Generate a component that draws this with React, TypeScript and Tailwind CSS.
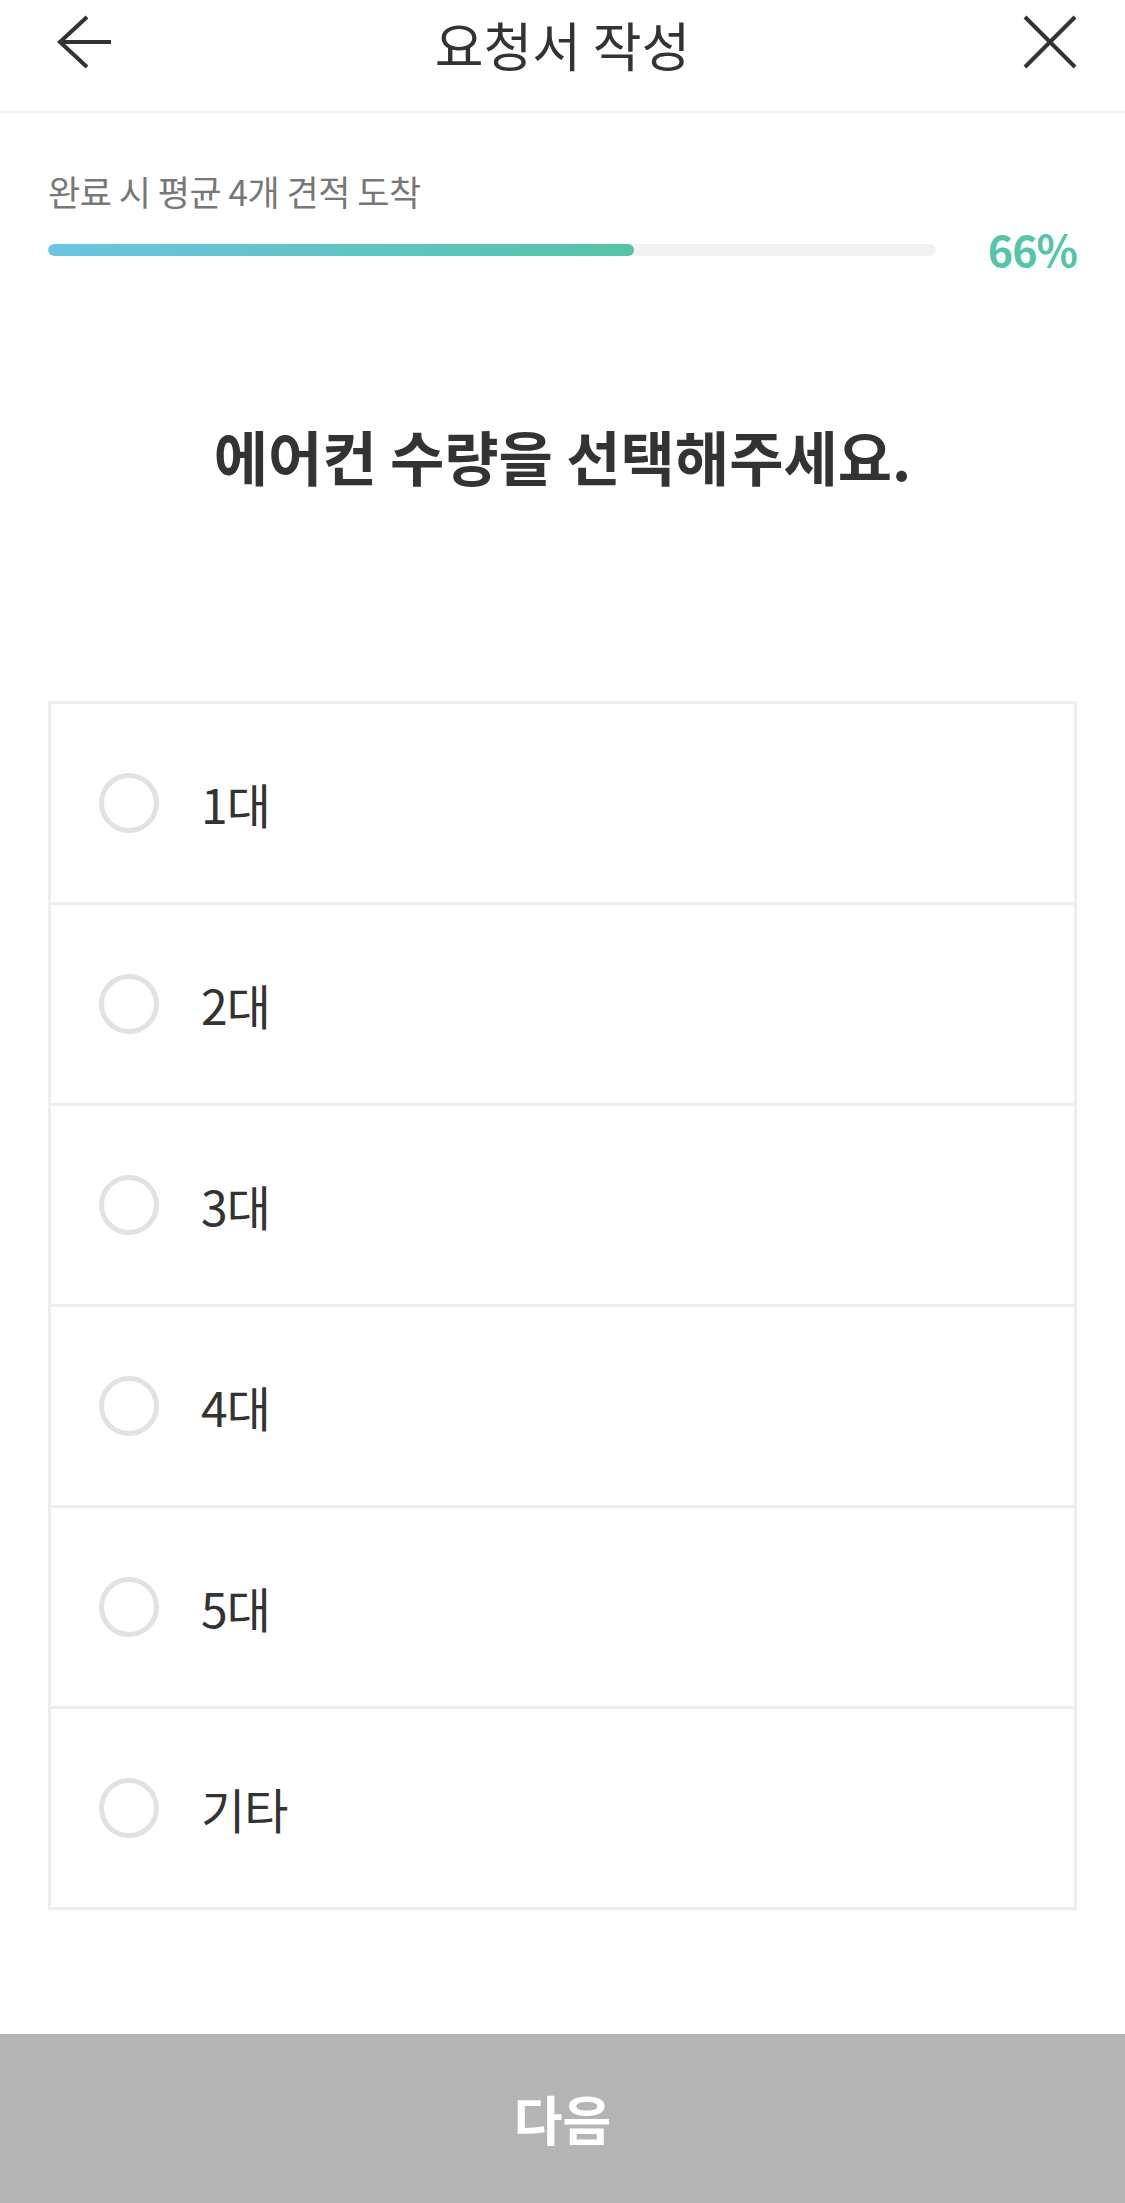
import React from "react";

const options = ["1대", "2대", "3대", "4대", "5대", "기타"];

export default function App() {
  return (
    <div
      className="flex min-h-screen w-[1125px] flex-col bg-white text-[#333333]"
      style={{ fontFamily: '"Noto Sans CJK KR", "Noto Sans", sans-serif' }}
    >
      <header className="grid h-[113px] grid-cols-[1fr_auto_1fr] items-start border-b-2 border-[#f3f3f3] px-[57px] pt-[15px]">
        <button className="h-[54px] w-[54px] justify-self-start" aria-label="back">
          <svg width="54" height="54" viewBox="0 0 54 54" fill="none">
            <path d="M30 2 L3 27 L30 52 M3 27 H54" stroke="#333" strokeWidth="4" />
          </svg>
        </button>
        <h1 className="pt-[1px] text-[53px] leading-[56px] font-normal">요청서 작성</h1>
        <button className="-mr-[9px] h-[54px] w-[54px] justify-self-end" aria-label="close">
          <svg width="54" height="54" viewBox="0 0 54 54" fill="none">
            <path d="M2 2 L52 52 M52 2 L2 52" stroke="#333" strokeWidth="4" />
          </svg>
        </button>
      </header>

      <section className="px-[48px] pt-[56px]">
        <p className="text-[35px] leading-[44px] tracking-[-0.5px] text-[#777777]">완료 시 평균 4개 견적 도착</p>
        <div className="mt-[12px] flex h-[50px] items-center">
          <div className="h-[12px] w-[888px] overflow-hidden rounded-full bg-[#f2f2f2]">
            <div
              className="h-full rounded-full bg-gradient-to-r from-[#6cc4e2] to-[#56c3a6]"
              style={{ width: "66%" }}
            />
          </div>
          <span className="-mt-[4px] ml-auto text-[43px] leading-[50px] font-bold tracking-[-1px] text-[#55c4a8]">66%</span>
        </div>
      </section>

      <h2 className="mt-[146px] text-center text-[59px] leading-[70px] font-bold text-[#333333]">
        에어컨 수량을 선택해주세요.
      </h2>

      <ul className="mx-[48px] mt-[210px] border-[3px] border-[#eeeeee]">
        {options.map((o, i) => (
          <li
            key={o}
            className={`box-content flex h-[198px] items-center ${i > 0 ? "border-t-[3px] border-[#eeeeee]" : ""}`}
          >
            <span className="ml-[48px] h-[60px] w-[60px] rounded-full border-[5px] border-[#e2e2e2]" />
            <span className="ml-[42px] text-[48px] leading-none tracking-[-1px] text-[#333333]">{o}</span>
          </li>
        ))}
      </ul>

      <button className="mt-auto flex h-[169px] w-full items-center justify-center bg-[#b4b4b4] text-[53px] font-bold text-white">
        다음
      </button>
    </div>
  );
}
